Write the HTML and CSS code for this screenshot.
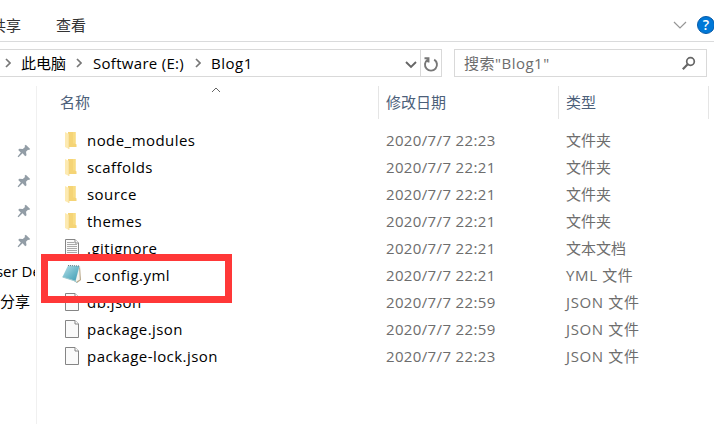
FILE: index.html
```
<!DOCTYPE html>
<html lang="zh-CN">
<head>
<meta charset="utf-8">
<title>Blog1</title>
<link rel="stylesheet" href="styles.css">
</head>
<body>
<svg class="defs" width="0" height="0">
  <symbol id="folder" viewBox="0 0 16 18"><path d="M4 1h7.500v11.500l1 1V16H4z" fill="#f5d476"/><path d="M9 1h2.500v11.500H9z" fill="#f8dc83"/><path d="M1 1l4 2v15l-4-2z" fill="#fdeab1"/><path d="M5 3v15" stroke="#eed080" stroke-width=".6"/></symbol>
  <symbol id="page" viewBox="0 0 16 18"><path d="M1.500.5H11l3.500 3.500v13.500h-13z" fill="#fafafa" stroke="#858585"/><path d="M11 .5V4h3.500" fill="#fff" stroke="#858585"/></symbol>
  <symbol id="text" viewBox="0 0 16 18"><use href="#page"/><path d="M3 3.500h7M3 5.500h10M3 7.500h10M3 9.500h10M3 11.500h10M3 13.500h10M3 15.500h10" stroke="#aaa"/></symbol>
  <symbol id="notepad" viewBox="0 0 20 20"><defs><linearGradient id="cover" x1="0" y1="0" x2="1" y2="1"><stop stop-color="#b9e1e9"/><stop offset=".55" stop-color="#6eb9ca"/><stop offset="1" stop-color="#3e9ab2"/></linearGradient></defs><path d="M18 2l1 14-4 3-3-2z" fill="#b9a98c"/><path d="M17 2l.8 13.500-3.800 2.500-2-2z" fill="#f4f3ed"/><path d="M6 1.500l11.500.5L13.500 17 .5 13z" fill="url(#cover)"/><path d="M6 1.500l11.500.5" stroke="#667b80" stroke-dasharray="1 1"/><path d="M.5 13L13 17l2 2" fill="none" stroke="#9cc8cf"/></symbol>
  <symbol id="pin" viewBox="0 0 14 14"><path d="M8.800.8L13.200 5l-1.200 1-1-.3-2 2 .5 3.500-1.300 1-2.600-2.900L1.500 13.200l-.9-.7 3.200-4L1.200 6l1.100-1.300 3.500.3 2.200-2-.4-1.200z" fill="#929da6"/></symbol>
</svg>
<div class="window">
  <header class="ribbon">
    <span class="share">共享</span><span class="view">查看</span>
    <svg class="collapse" width="14" height="9" viewBox="0 0 14 9"><path d="M1 1l6 6 6-6" fill="none" stroke="#969696" stroke-width="1.200"/></svg>
    <span class="help">?</span>
  </header>
  <div class="toolbar">
    <nav class="address">
      <svg class="sep first" width="6" height="10"><path d="M1 1l4 4-4 4"/></svg><span class="crumb c1">此电脑</span>
      <svg class="sep second" width="6" height="10"><path d="M1 1l4 4-4 4"/></svg><span class="crumb c2">Software (E:)</span>
      <svg class="sep third" width="6" height="10"><path d="M1 1l4 4-4 4"/></svg><span class="crumb c3">Blog1</span>
      <svg class="drop" width="12" height="8"><path d="M1 1l5 5 5-5" fill="none" stroke="#666" stroke-width="1.900"/></svg>
      <span class="refresh"><svg width="16" height="16"><path d="M4.600 3.700a6 6 0 1 0 6.600-.1M1.500 2.200h4v4.300" fill="none" stroke="#777" stroke-width="1.900"/></svg></span>
    </nav>
    <div class="search"><span>搜索"Blog1"</span><svg width="15" height="15"><circle cx="9.500" cy="5.500" r="3.800" fill="none" stroke="#666" stroke-width="1.700"/><path d="M6.700 8.300L1.800 13.200" stroke="#666" stroke-width="2.200"/></svg></div>
  </div>
  <div class="content">
    <aside>
      <div class="nav-item"><svg><use href="#pin"/></svg></div>
      <div class="nav-item"><svg><use href="#pin"/></svg></div>
      <div class="nav-item"><svg><use href="#pin"/></svg></div>
      <div class="nav-item"><svg><use href="#pin"/></svg></div>
      <div class="nav-item clipped"><span class="user">User De</span></div>
      <div class="nav-item"><span class="shared">分享</span></div>
    </aside>
    <main>
      <div class="row head"><span class="name">名称<svg class="sort" width="10" height="6"><path d="M1 5l4-4 4 4" fill="none" stroke="#666"/></svg></span><span class="date">修改日期</span><span class="type">类型</span></div>
      <div class="row"><span class="name"><svg><use href="#folder"/></svg>node_modules</span><span class="date">2020/7/7 22:23</span><span class="type">文件夹</span></div>
      <div class="row"><span class="name"><svg><use href="#folder"/></svg>scaffolds</span><span class="date">2020/7/7 22:21</span><span class="type">文件夹</span></div>
      <div class="row"><span class="name"><svg><use href="#folder"/></svg>source</span><span class="date">2020/7/7 22:21</span><span class="type">文件夹</span></div>
      <div class="row"><span class="name"><svg><use href="#folder"/></svg>themes</span><span class="date">2020/7/7 22:21</span><span class="type">文件夹</span></div>
      <div class="row"><span class="name"><svg><use href="#text"/></svg>.gitignore</span><span class="date">2020/7/7 22:21</span><span class="type">文本文档</span></div>
      <div class="row"><span class="name"><svg class="note"><use href="#notepad"/></svg>_config.yml</span><span class="date">2020/7/7 22:21</span><span class="type mixed">YML 文件</span></div>
      <div class="row"><span class="name"><svg><use href="#page"/></svg>db.json</span><span class="date">2020/7/7 22:59</span><span class="type mixed">JSON 文件</span></div>
      <div class="row"><span class="name"><svg><use href="#page"/></svg>package.json</span><span class="date">2020/7/7 22:59</span><span class="type mixed">JSON 文件</span></div>
      <div class="row"><span class="name"><svg><use href="#page"/></svg>package-lock.json</span><span class="date">2020/7/7 22:23</span><span class="type mixed">JSON 文件</span></div>
    </main>
  </div>
  <div class="highlight"></div>
</div>
</body>
</html>
```
FILE: styles.css
```
* { box-sizing: border-box; }
body { margin: 0; background: #fff; color: #000; font: 15px/27px "Open Sans", "Noto Sans CJK SC", sans-serif; }
svg { display: block; flex: none; }
.defs { position: absolute; }
.window { position: relative; width: 714px; height: 424px; overflow: hidden; white-space: nowrap; }
.ribbon { display: flex; align-items: center; height: 42px; padding-top: 9px; border-bottom: 1px solid #dadbdc; color: #333; }
.share { width: 30px; margin-left: -9px; }
.view { margin-left: 35px; }
.collapse { margin-left: auto; }
.help { display: block; width: 18px; height: 18px; margin: 0 -1px 0 10px; border-radius: 50%; border: 1px solid #075aa8; background: #0078d7; color: #fff; font-size: 14px; font-weight: 600; line-height: 16px; text-align: center; }
.toolbar { display: flex; gap: 12px; height: 44px; padding-top: 7px; }
.address, .search { display: flex; align-items: center; height: 28px; border: 1px solid #d9d9d9; }
.address { width: 442px; border-left: 0; }
.sep { margin: 0 10px; fill: none; stroke: #777; stroke-width: 1.7; }
.sep.first { margin-left: 5px; }
.sep.second { margin-right: 11px; }
.c2 { width: 93px; letter-spacing: .3px; }
.sep.third { margin-left: 9px; }
.c3 { letter-spacing: .5px; }
.drop { margin: 3px 3px 0 auto; }
.refresh { display: flex; align-items: center; justify-content: center; width: 21px; height: 26px; border-left: 1px solid #d9d9d9; }
.refresh svg { margin-top: 1px; }
.search { justify-content: space-between; width: 253px; padding: 0 10px 0 9px; color: #6d6d6d; letter-spacing: .5px; }
.content { display: flex; height: 338px; }
aside { width: 37px; padding-top: 50px; overflow: hidden; border-right: 1px solid #f0f0f0; }
.nav-item { display: flex; align-items: center; height: 30px; overflow: hidden; }
.nav-item svg { width: 14px; height: 14px; margin-left: 17px; }
.clipped { width: 35px; }
.user { flex: none; margin-left: -15px; }
main { width: 677px; }
.row { display: grid; grid-template-columns: 342px 180px 150px; height: 27px; color: #6d6d6d; }
.row span { display: flex; align-items: center; }
.row .name { padding-left: 27px; color: #000; letter-spacing: .45px; }
.row .name svg { width: 16px; height: 18px; margin: -2px 7px 0 0; }
.row .name .note { width: 20px; height: 20px; margin: -3px 5px 0 -2px; }
.row .date, .row .type { padding-left: 7px; }
.row .date { letter-spacing: .36px; }
.row .mixed { letter-spacing: .65px; }
.row.head { height: 33px; margin-bottom: 8px; }
.row.head span { position: relative; border-right: 1px solid #e5e5e5; color: #4c607a; letter-spacing: 0; }
.row.head .name { padding-left: 23px; }
.row .name .sort { position: absolute; left: 174px; top: 1px; width: 10px; height: 6px; margin: 0; }
.highlight { position: absolute; left: 41px; top: 254px; width: 191px; height: 49px; border: 7px solid #ff3838; }
```
